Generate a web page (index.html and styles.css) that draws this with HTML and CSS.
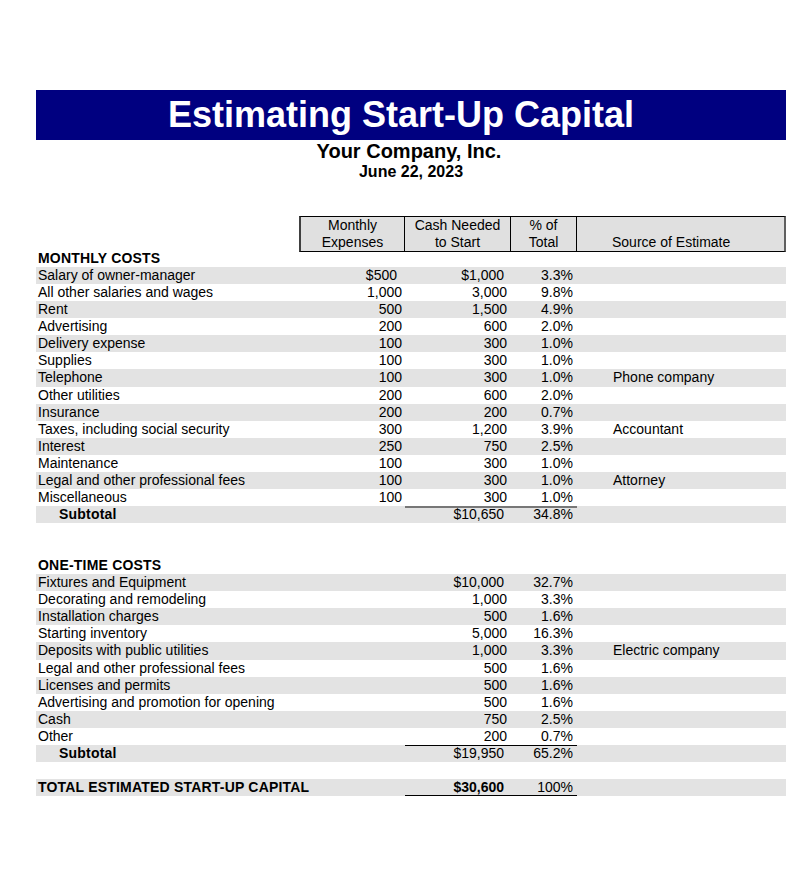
FILE: index.html
```html
<!DOCTYPE html>
<html lang="en">
<head>
<meta charset="utf-8">
<title>Estimating Start-Up Capital</title>
<link rel="stylesheet" href="styles.css">
</head>
<body>
<div class="sheet">
  <div class="title-band"><h1 class="title">Estimating Start-Up Capital</h1></div>
  <div class="company">Your Company, Inc.</div>
  <div class="date">June 22, 2023</div>

  <div class="grid">
    <div class="row head">
      <div class="cell"></div>
      <div class="hcell first">Monthly<br>Expenses</div>
      <div class="hcell">Cash Needed<br>to Start</div>
      <div class="hcell">% of<br>Total</div>
      <div class="hcell src">Source of Estimate</div>
    </div>

    <div class="row"><div class="cell lbl bold">MONTHLY COSTS</div><div class="cell"></div><div class="cell"></div><div class="cell"></div><div class="cell"></div></div>
    <div class="row shade"><div class="cell lbl">Salary of owner-manager</div><div class="cell num cur">$500</div><div class="cell num cur">$1,000</div><div class="cell pct">3.3%</div><div class="cell note"></div></div>
    <div class="row"><div class="cell lbl">All other salaries and wages</div><div class="cell num">1,000</div><div class="cell num">3,000</div><div class="cell pct">9.8%</div><div class="cell note"></div></div>
    <div class="row shade"><div class="cell lbl">Rent</div><div class="cell num">500</div><div class="cell num">1,500</div><div class="cell pct">4.9%</div><div class="cell note"></div></div>
    <div class="row"><div class="cell lbl">Advertising</div><div class="cell num">200</div><div class="cell num">600</div><div class="cell pct">2.0%</div><div class="cell note"></div></div>
    <div class="row shade"><div class="cell lbl">Delivery expense</div><div class="cell num">100</div><div class="cell num">300</div><div class="cell pct">1.0%</div><div class="cell note"></div></div>
    <div class="row"><div class="cell lbl">Supplies</div><div class="cell num">100</div><div class="cell num">300</div><div class="cell pct">1.0%</div><div class="cell note"></div></div>
    <div class="row shade"><div class="cell lbl">Telephone</div><div class="cell num">100</div><div class="cell num">300</div><div class="cell pct">1.0%</div><div class="cell note">Phone company</div></div>
    <div class="row"><div class="cell lbl">Other utilities</div><div class="cell num">200</div><div class="cell num">600</div><div class="cell pct">2.0%</div><div class="cell note"></div></div>
    <div class="row shade"><div class="cell lbl">Insurance</div><div class="cell num">200</div><div class="cell num">200</div><div class="cell pct">0.7%</div><div class="cell note"></div></div>
    <div class="row"><div class="cell lbl">Taxes, including social security</div><div class="cell num">300</div><div class="cell num">1,200</div><div class="cell pct">3.9%</div><div class="cell note">Accountant</div></div>
    <div class="row shade"><div class="cell lbl">Interest</div><div class="cell num">250</div><div class="cell num">750</div><div class="cell pct">2.5%</div><div class="cell note"></div></div>
    <div class="row"><div class="cell lbl">Maintenance</div><div class="cell num">100</div><div class="cell num">300</div><div class="cell pct">1.0%</div><div class="cell note"></div></div>
    <div class="row shade"><div class="cell lbl">Legal and other professional fees</div><div class="cell num">100</div><div class="cell num">300</div><div class="cell pct">1.0%</div><div class="cell note">Attorney</div></div>
    <div class="row"><div class="cell lbl">Miscellaneous</div><div class="cell num">100</div><div class="cell num">300</div><div class="cell pct">1.0%</div><div class="cell note"></div></div>
    <div class="row shade"><div class="cell lbl sub bold">Subtotal</div><div class="cell"></div><div class="cell num cur rule-gray">$10,650</div><div class="cell pct rule-gray">34.8%</div><div class="cell note"></div></div>

    <div class="row"><div class="cell"></div><div class="cell"></div><div class="cell"></div><div class="cell"></div><div class="cell"></div></div>
    <div class="row"><div class="cell"></div><div class="cell"></div><div class="cell"></div><div class="cell"></div><div class="cell"></div></div>

    <div class="row"><div class="cell lbl bold">ONE-TIME COSTS</div><div class="cell"></div><div class="cell"></div><div class="cell"></div><div class="cell"></div></div>
    <div class="row shade"><div class="cell lbl">Fixtures and Equipment</div><div class="cell"></div><div class="cell num cur">$10,000</div><div class="cell pct">32.7%</div><div class="cell note"></div></div>
    <div class="row"><div class="cell lbl">Decorating and remodeling</div><div class="cell"></div><div class="cell num">1,000</div><div class="cell pct">3.3%</div><div class="cell note"></div></div>
    <div class="row shade"><div class="cell lbl">Installation charges</div><div class="cell"></div><div class="cell num">500</div><div class="cell pct">1.6%</div><div class="cell note"></div></div>
    <div class="row"><div class="cell lbl">Starting inventory</div><div class="cell"></div><div class="cell num">5,000</div><div class="cell pct">16.3%</div><div class="cell note"></div></div>
    <div class="row shade"><div class="cell lbl">Deposits with public utilities</div><div class="cell"></div><div class="cell num">1,000</div><div class="cell pct">3.3%</div><div class="cell note">Electric company</div></div>
    <div class="row"><div class="cell lbl">Legal and other professional fees</div><div class="cell"></div><div class="cell num">500</div><div class="cell pct">1.6%</div><div class="cell note"></div></div>
    <div class="row shade"><div class="cell lbl">Licenses and permits</div><div class="cell"></div><div class="cell num">500</div><div class="cell pct">1.6%</div><div class="cell note"></div></div>
    <div class="row"><div class="cell lbl">Advertising and promotion for opening</div><div class="cell"></div><div class="cell num">500</div><div class="cell pct">1.6%</div><div class="cell note"></div></div>
    <div class="row shade"><div class="cell lbl">Cash</div><div class="cell"></div><div class="cell num">750</div><div class="cell pct">2.5%</div><div class="cell note"></div></div>
    <div class="row"><div class="cell lbl">Other</div><div class="cell"></div><div class="cell num">200</div><div class="cell pct">0.7%</div><div class="cell note"></div></div>
    <div class="row shade"><div class="cell lbl sub bold">Subtotal</div><div class="cell"></div><div class="cell num cur rule-black">$19,950</div><div class="cell pct rule-black">65.2%</div><div class="cell note"></div></div>

    <div class="row"><div class="cell"></div><div class="cell"></div><div class="cell"></div><div class="cell"></div><div class="cell"></div></div>

    <div class="row shade"><div class="cell lbl bold">TOTAL ESTIMATED START-UP CAPITAL</div><div class="cell"></div><div class="cell num cur bold dbl">$30,600</div><div class="cell pct dbl">100%</div><div class="cell note"></div></div>
  </div>
</div>
</body>
</html>
```

FILE: styles.css
```css
html, body {
  margin: 0;
  padding: 0;
  background: #ffffff;
}

body {
  font-family: "Liberation Sans", Arial, sans-serif;
  font-size: 14px;
  color: #000000;
}

.sheet {
  width: 750px;
  margin-left: 36px;
  padding-top: 90px;
}

.title-band {
  height: 50px;
  background: #000080;
  display: flex;
  justify-content: center;
  align-items: center;
  padding-right: 20px;
}

.title {
  margin: 0;
  font-size: 36px;
  line-height: 50px;
  font-weight: bold;
  color: #ffffff;
}

.company {
  margin-top: 1px;
  text-align: center;
  font-size: 20px;
  line-height: 20px;
  font-weight: bold;
  padding-right: 4px;
}

.date {
  margin-top: 2px;
  text-align: center;
  font-size: 16px;
  line-height: 18px;
  font-weight: bold;
}

.grid {
  margin-top: 35px;
}

.row {
  display: grid;
  grid-template-columns: 263px 106px 106px 66px 209px;
  height: 17.07px;
  line-height: 17px;
}

.row.shade {
  background: #e3e3e3;
}

.row.head {
  height: 34px;
  background: #ffffff;
}

.hcell {
  background: #e0e0e0;
  border-top: 1px solid #000;
  border-bottom: 1px solid #000;
  border-right: 1px solid #000;
  text-align: center;
  line-height: 17px;
  box-sizing: border-box;
}

.hcell.first {
  border-left: 2px solid #404040;
}

.hcell.src {
  border-right: 2px solid #606060;
  text-align: left;
  padding-left: 35px;
  display: flex;
  align-items: flex-end;
}

.cell {
  white-space: nowrap;
  overflow: visible;
}

.lbl {
  padding-left: 2px;
}

.lbl.sub {
  padding-left: 23px;
}

.bold {
  font-weight: bold;
}

.lbl.bold {
  letter-spacing: 0.2px;
}

.num {
  text-align: right;
  padding-right: 4px;
}

.num.cur {
  padding-right: 7px;
}

.row > .num:nth-child(2) {
  padding-right: 3px;
}

.row > .num.cur:nth-child(2) {
  padding-right: 8px;
}

.pct {
  text-align: right;
  padding-right: 4px;
}

.note {
  padding-left: 36px;
}

.rule-gray {
  box-shadow: inset 0 2px 0 #777777;
}

.rule-black {
  box-shadow: inset 0 1px 0 #000000;
}

.dbl {
  box-shadow: inset 0 -1px 0 #000000, 0 2px 0 #707070;
}
```
